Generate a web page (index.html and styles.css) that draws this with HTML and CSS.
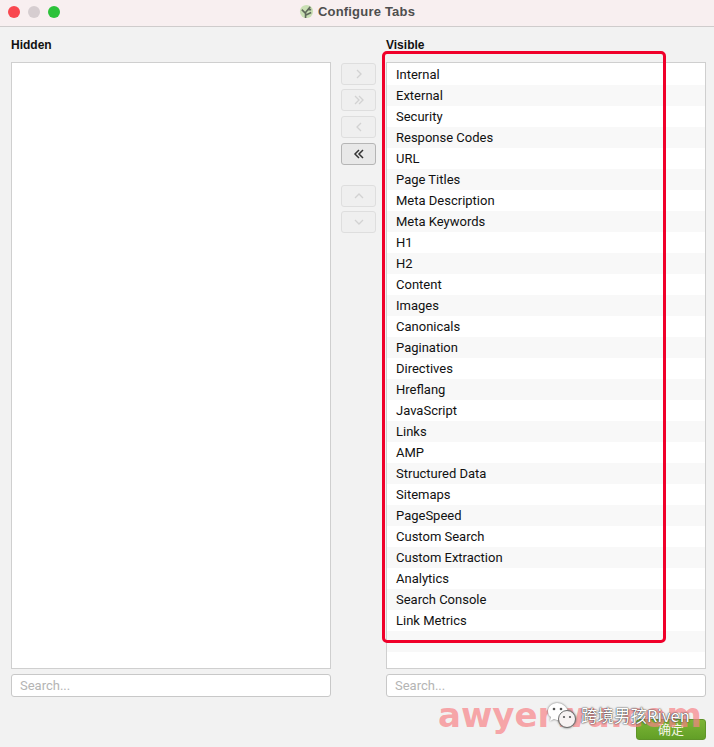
FILE: index.html
```html
<!DOCTYPE html>
<html>
<head>
	<meta charset="UTF-8">
	<title>Configure Tabs</title>
	<link rel="stylesheet" href="styles.css">
</head>
<body>

<div class="window">
	<div class="titleBar">
		<div class="lights">
			<u class="close"></u>
			<u class="idle"></u>
			<u class="zoom"></u>
		</div>
		<div class="title">
			<svg class="appIcon" width="15" height="15" viewBox="0 0 16 16">
				<circle cx="8" cy="8" r="7" fill="#c9dfb4"/>
				<path d="M7 15V9M7 10L3 6M7 9l5-6M7 12l6-3M9 6l4 0" fill="none" stroke="#5f6a5b" stroke-width="1.7"/>
			</svg>
			<b>Configure Tabs</b>
		</div>
	</div>

	<div class="columns">
		<div class="column">
			<b class="heading">Hidden</b>
			<div class="list"></div>
			<div class="search">Search...</div>
		</div>

		<div class="arrows">
			<div class="arrowGroup">
				<span class="arrowButton"><svg width="12" height="12" viewBox="0 0 12 12"><path d="M4 2l4 4-4 4"/></svg></span>
				<span class="arrowButton"><svg width="12" height="12" viewBox="0 0 12 12"><path d="M2 2l4 4-4 4M6 2l4 4-4 4"/></svg></span>
				<span class="arrowButton"><svg width="12" height="12" viewBox="0 0 12 12"><path d="M8 2L4 6l4 4"/></svg></span>
				<span class="arrowButton active"><svg width="12" height="12" viewBox="0 0 12 12"><path d="M6 2L2 6l4 4M10 2L6 6l4 4"/></svg></span>
			</div>
			<div class="arrowGroup">
				<span class="arrowButton"><svg width="12" height="12" viewBox="0 0 12 12"><path d="M2 8l4-4 4 4"/></svg></span>
				<span class="arrowButton"><svg width="12" height="12" viewBox="0 0 12 12"><path d="M2 4l4 4 4-4"/></svg></span>
			</div>
		</div>

		<div class="column">
			<b class="heading">Visible</b>
			<div class="list">
				<div class="row">Internal</div>
				<div class="row">External</div>
				<div class="row">Security</div>
				<div class="row">Response Codes</div>
				<div class="row">URL</div>
				<div class="row">Page Titles</div>
				<div class="row">Meta Description</div>
				<div class="row">Meta Keywords</div>
				<div class="row">H1</div>
				<div class="row">H2</div>
				<div class="row">Content</div>
				<div class="row">Images</div>
				<div class="row">Canonicals</div>
				<div class="row">Pagination</div>
				<div class="row">Directives</div>
				<div class="row">Hreflang</div>
				<div class="row">JavaScript</div>
				<div class="row">Links</div>
				<div class="row">AMP</div>
				<div class="row">Structured Data</div>
				<div class="row">Sitemaps</div>
				<div class="row">PageSpeed</div>
				<div class="row">Custom Search</div>
				<div class="row">Custom Extraction</div>
				<div class="row">Analytics</div>
				<div class="row">Search Console</div>
				<div class="row">Link Metrics</div>
				<div class="row"></div>
			</div>
			<div class="search">Search...</div>
		</div>
	</div>

	<div class="footer">
		<span class="okButton">确定</span>
	</div>

	<div class="highlight"></div>
	<div class="watermark">awyerwu.com</div>
	<div class="wechat">
		<svg class="wechatIcon" width="30" height="27" viewBox="0 0 30 27">
			<path d="M10 1C5 1 1 5 1 9c0 3 1 5 3 6l-1 4 4-2c1 0 2 1 3 1h2c0-5 3-9 8-9 1 0 1 0 1 0C19 4 15 1 10 1z" fill="#fff"/>
			<circle cx="20" cy="17" r="8.5" fill="#f7f2f2" stroke="#6a6a6a" stroke-width="1"/>
			<circle cx="7" cy="7" r="1.3" fill="#555"/>
			<circle cx="14" cy="7" r="1.3" fill="#555"/>
			<circle cx="17" cy="15" r="1.1" fill="#555"/>
			<circle cx="23" cy="15" r="1.1" fill="#555"/>
		</svg>
		<span>跨境男孩Riven</span>
	</div>
</div>

</body>
</html>
```
FILE: styles.css
```css
html, body
{
	height: 100%;
	margin: 0;
	padding: 0;
	background-color: #f2f2f2;
	font-family: Roboto, "Liberation Sans", "Noto Sans CJK SC", sans-serif;
	font-size: 13px;
	color: #111;
	overflow: hidden;
}

.window
{
	position: relative;
	width: 714px;
	height: 747px;
}

.titleBar
{
	display: flex;
	align-items: center;
	justify-content: center;
	position: relative;
	height: 27px;
	box-sizing: border-box;
	padding-bottom: 3px;
	background-color: #f8eff0;
	border-bottom: 1px solid #cfcccc;
}
.lights
{
	position: absolute;
	top: 6px;
	left: 8px;
	display: flex;
	gap: 8px;
}
.lights u
{
	display: block;
	width: 12px;
	height: 12px;
	border-radius: 50%;
}
.lights .close { background-color: #f9474f; }
.lights .idle { background-color: #d6cdd0; }
.lights .zoom { background-color: #2cc23a; }

.title
{
	display: flex;
	align-items: center;
	gap: 4px;
	color: #4e4e4e;
	font-size: 13px;
	letter-spacing: 0.2px;
}
.title b
{
	font-family: "Liberation Sans", sans-serif;
}

.columns
{
	display: grid;
	grid-template-columns: 320px 35px 320px;
	gap: 10px;
	padding: 10px 8px 0 11px;
}
.column
{
	display: flex;
	flex-direction: column;
}
.heading
{
	height: 25px;
	line-height: 17px;
	font-family: "Liberation Sans", sans-serif;
	font-size: 12px;
	color: #111;
}
.list
{
	box-sizing: border-box;
	height: 607px;
	padding-top: 1px;
	background-color: #fff;
	border: 1px solid #cfcfcf;
}
.row
{
	height: 21px;
	line-height: 21px;
	padding-left: 9px;
	white-space: nowrap;
}
.row:nth-child(even)
{
	background-color: #f8f8f8;
}
.search
{
	box-sizing: border-box;
	height: 23px;
	line-height: 22px;
	margin-top: 5px;
	padding-left: 8px;
	background-color: #fff;
	border: 1px solid #c8c8c8;
	border-radius: 3px;
	color: #b4b4b4;
}

.arrows
{
	display: flex;
	flex-direction: column;
	gap: 20px;
	padding-top: 26px;
}
.arrowGroup
{
	display: flex;
	flex-direction: column;
	gap: 5px;
}
.arrowButton
{
	display: flex;
	align-items: center;
	justify-content: center;
	box-sizing: border-box;
	height: 22px;
	background-color: #efefef;
	border: 1px solid #dedede;
	border-radius: 3px;
}
.arrowButton:first-child + .arrowButton
{
	margin-top: -1px;
}
.arrowButton svg path
{
	fill: none;
	stroke: #d2d2d2;
	stroke-width: 1.3;
}
.arrowButton.active
{
	background-color: #e8e8e8;
	border-color: #b5b5b5;
}
.arrowButton.active svg path
{
	stroke: #333;
	stroke-width: 1.5;
}

.footer
{
	display: flex;
	justify-content: flex-end;
	padding: 22px 8px 0 0;
}
.okButton
{
	display: block;
	box-sizing: border-box;
	width: 70px;
	height: 21px;
	line-height: 19px;
	text-align: center;
	border: 1px solid #5f9428;
	border-radius: 3px;
	background: linear-gradient(#7cb535, #629f27);
	color: #f6f6e8;
	font-size: 13px;
}

/* over the content */
.highlight
{
	position: absolute;
	top: 51px;
	left: 382px;
	width: 278px;
	height: 586px;
	border: 3px solid #f0002a;
	border-radius: 5px;
}
.watermark
{
	position: absolute;
	top: 692px;
	left: 438px;
	font-family: "DejaVu Sans", sans-serif;
	font-weight: bold;
	font-size: 34px;
	line-height: 46px;
	color: rgba(248, 130, 135, 0.7);
	white-space: nowrap;
}
.wechat
{
	position: absolute;
	top: 702px;
	left: 547px;
	display: flex;
	align-items: center;
	gap: 4px;
	color: #fff;
	font-family: "Noto Sans CJK SC", Roboto, sans-serif;
	font-size: 16.5px;
	line-height: 27px;
	text-shadow: 0 0 2px #333, 0 0 1px #333;
	white-space: nowrap;
}
.wechatIcon
{
	filter: drop-shadow(0 0 1px #666);
}
```
